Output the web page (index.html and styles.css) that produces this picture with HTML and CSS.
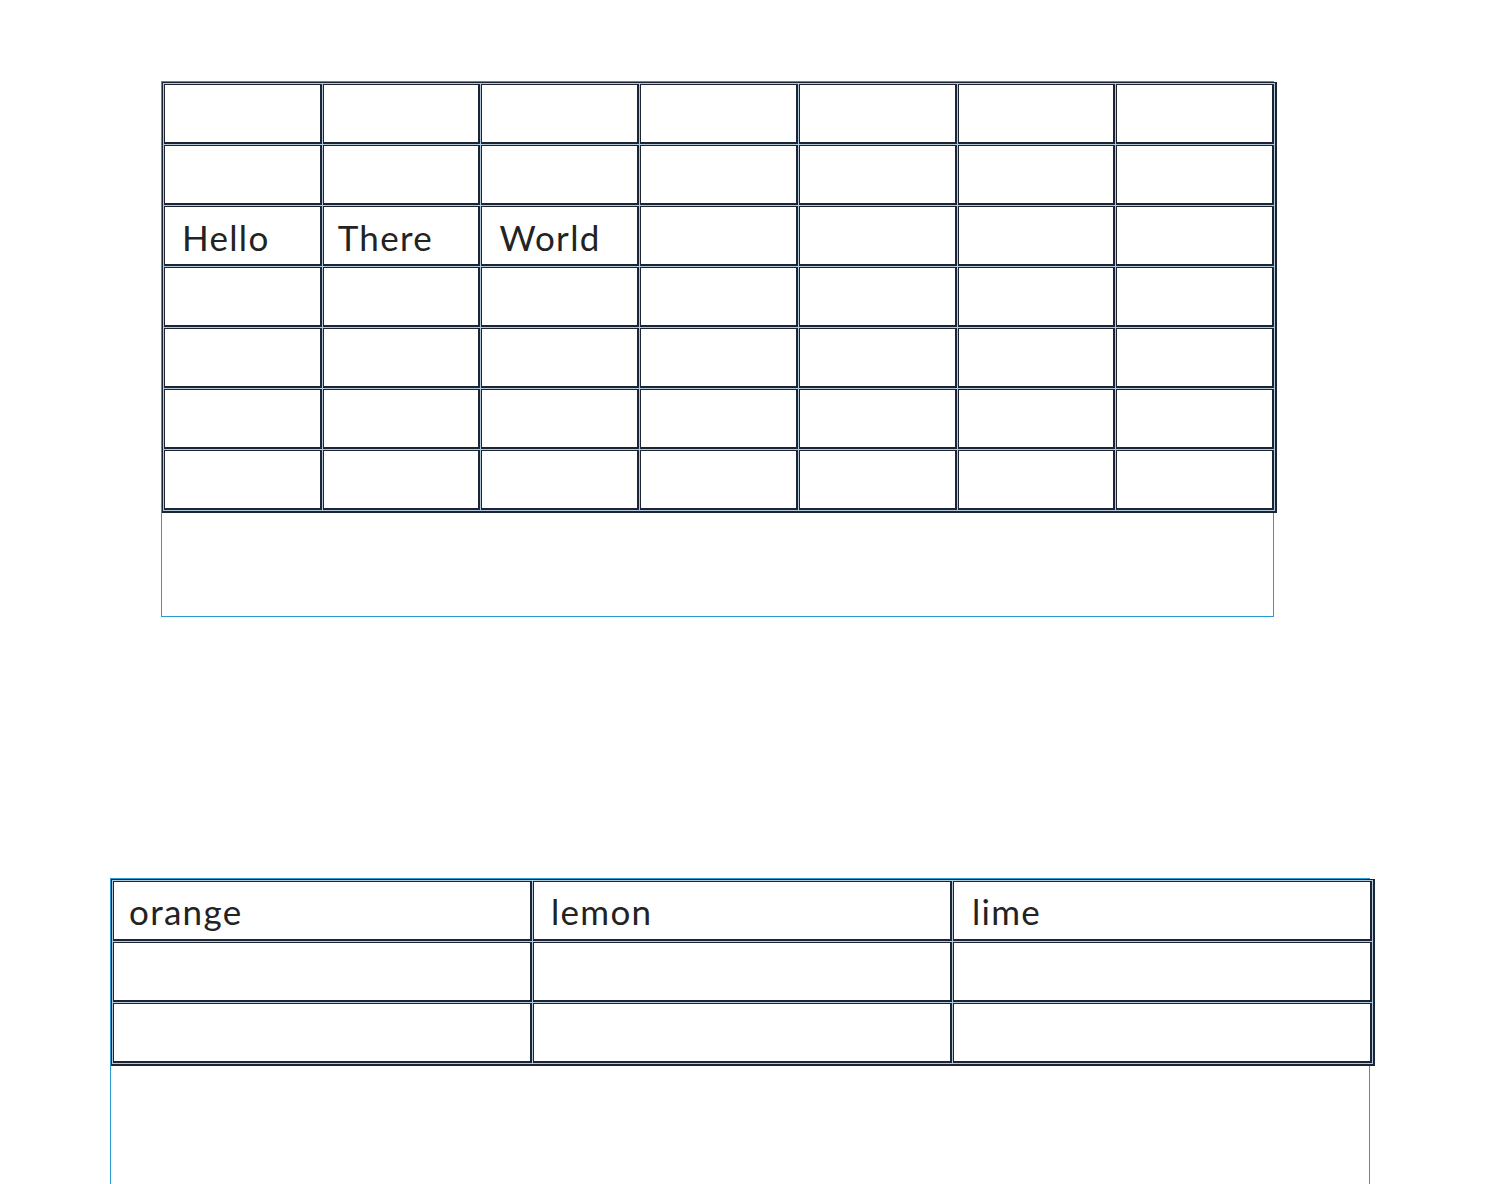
FILE: index.html
```html
<!DOCTYPE html>
<html>
<head>
<meta charset="utf-8">
<link rel="stylesheet" href="styles.css">
</head>
<body>
<div class="page">
  <div class="editor editor-one">
    <table class="grid grid-seven">
      <tr><td></td><td></td><td></td><td></td><td></td><td></td><td></td></tr>
      <tr><td></td><td></td><td></td><td></td><td></td><td></td><td></td></tr>
      <tr><td>Hello</td><td class="tight">There</td><td>World</td><td></td><td></td><td></td><td></td></tr>
      <tr><td></td><td></td><td></td><td></td><td></td><td></td><td></td></tr>
      <tr><td></td><td></td><td></td><td></td><td></td><td></td><td></td></tr>
      <tr><td></td><td></td><td></td><td></td><td></td><td></td><td></td></tr>
      <tr><td></td><td></td><td></td><td></td><td></td><td></td><td></td></tr>
    </table>
  </div>
  <div class="editor editor-two">
    <table class="grid grid-three">
      <tr><td>orange</td><td class="lemon">lemon</td><td class="lime">lime</td></tr>
      <tr><td></td><td></td><td></td></tr>
      <tr><td></td><td></td><td></td></tr>
    </table>
  </div>
</div>
</body>
</html>
```
FILE: styles.css
```css
html, body {
  margin: 0;
  padding: 0;
  background: #ffffff;
  overflow: hidden;
}

.page {
  display: flex;
  flex-direction: column;
  align-items: flex-start;
  width: 1488px;
  height: 1184px;
  overflow: hidden;
}

.editor {
  border: 1px solid #2a9ad4;
  height: 534px;
  flex-shrink: 0;
}

.editor-one {
  margin: 81px 0 0 161px;
  width: 1111px;
}

.editor-two {
  margin: 261px 0 0 110px;
  width: 1258px;
}

.grid {
  table-layout: fixed;
  border-collapse: separate;
  border-spacing: 1px;
  border: 1px solid #1c2535;
  border-width: 1px 2px 2px 1px;
  background: #b4cadb;
  font-family: Lato, "Open Sans", sans-serif;
  font-size: 35px;
  line-height: 44px;
  letter-spacing: 1.3px;
  color: #232323;
}

.grid-seven {
  width: 1115px;
}

.grid-three {
  width: 1264px;
}

.grid td {
  background: #ffffff;
  border-style: solid;
  border-color: #1c2535;
  border-width: 1px 2px 2px 1px;
  box-sizing: border-box;
  height: 60px;
  padding: 8px 0 0 17px;
  vertical-align: top;
  white-space: nowrap;
}

.grid td.tight {
  padding-left: 14px;
}

.grid-three td {
  padding-left: 15px;
  padding-top: 7px;
}

.grid-three td.lemon {
  padding-left: 17px;
}

.grid-three td.lime {
  padding-left: 18px;
}
```
